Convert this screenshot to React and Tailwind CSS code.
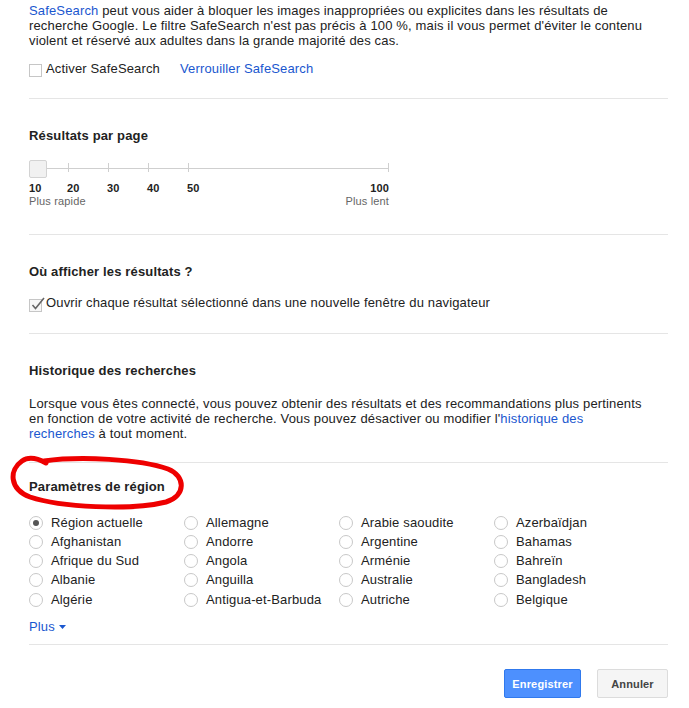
import React from "react";

const F = { fontFamily: '"Liberation Sans", Arial, sans-serif' };

function Sep({ className = "" }) {
  return <div className={"border-t border-[#e5e5e5] " + className} />;
}

function Heading({ children, className = "" }) {
  return (
    <div className={"text-[13px] font-bold leading-[16px] text-[#222] " + className}>
      {children}
    </div>
  );
}

function Radio({ checked, label }) {
  return (
    <div className="flex items-center gap-[8px] h-[19.25px]">
      <span className="w-[14px] h-[14px] rounded-full border border-[#c8c8c8] bg-white flex items-center justify-center shrink-0">
        {checked && <span className="w-[6px] h-[6px] rounded-full bg-[#555]" />}
      </span>
      <span className="text-[13px] text-[#222] leading-[16px] whitespace-nowrap">{label}</span>
    </div>
  );
}

const cols = [
  ["Région actuelle", "Afghanistan", "Afrique du Sud", "Albanie", "Algérie"],
  ["Allemagne", "Andorre", "Angola", "Anguilla", "Antigua-et-Barbuda"],
  ["Arabie saoudite", "Argentine", "Arménie", "Australie", "Autriche"],
  ["Azerbaïdjan", "Bahamas", "Bahreïn", "Bangladesh", "Belgique"],
];

const ticks = [
  { v: "20", x: 39 },
  { v: "30", x: 79 },
  { v: "40", x: 119 },
  { v: "50", x: 159 },
];

export default function App() {
  return (
    <div style={F} className="relative w-[689px] h-[708px] bg-white overflow-hidden text-[#222] tracking-[0.15px]">
      <div className="pl-[29px] pr-[21px]">
        {/* SafeSearch */}
        <p className="pt-[3px] text-[13px] leading-[15px] whitespace-nowrap">
          <span className="text-[#1a57cf]">SafeSearch</span> peut vous aider à bloquer les images inappropriées ou explicites dans les résultats de
          <br />
          recherche Google. Le filtre SafeSearch n'est pas précis à 100 %, mais il vous permet d'éviter le contenu
          <br />
          violent et réservé aux adultes dans la grande majorité des cas.
        </p>
        <div className="mt-[13px] flex items-center h-[16px] text-[13px]">
          <span className="w-[13px] h-[13px] border border-[#c6c6c6] bg-white mt-[3px]" />
          <span className="ml-[4px]">Activer SafeSearch</span>
          <span className="ml-[20px] text-[#1a57cf]">Verrouiller SafeSearch</span>
        </div>
        <Sep className="mt-[21px]" />

        {/* Résultats par page */}
        <Heading className="mt-[29px]">Résultats par page</Heading>
        <div className="mt-[16px] relative w-[360px] h-[18px]">
          <div className="absolute left-[18px] right-0 top-[8px] h-[1px] bg-[#cfcfcf]" />
          {[39, 79, 119, 159, 359].map((x) => (
            <div key={x} className="absolute top-[3px] w-[1px] h-[9px] bg-[#cfcfcf]" style={{ left: x }} />
          ))}
          <div className="absolute left-0 top-0 w-[18px] h-[18px] rounded-[2px] border border-[#d3d3d3] bg-[#f1f1f1]" />
        </div>
        <div className="relative w-[360px] h-[13px] mt-[4px] text-[11px] font-bold leading-[13px] text-[#222]">
          <span className="absolute left-0">10</span>
          {ticks.map((t) => (
            <span key={t.v} className="absolute" style={{ left: t.x - 1 }}>{t.v}</span>
          ))}
          <span className="absolute right-0">100</span>
        </div>
        <div className="flex justify-between w-[360px] text-[11px] leading-[13px] text-[#666]">
          <span>Plus rapide</span>
          <span>Plus lent</span>
        </div>
        <Sep className="mt-[26px]" />

        {/* Où afficher */}
        <Heading className="mt-[29px]">Où afficher les résultats ?</Heading>
        <div className="mt-[15px] flex items-center h-[16px] text-[13px]">
          <span className="relative w-[13px] h-[13px] border border-[#c6c6c6] bg-[#f7f7f7] mt-[4px] shrink-0">
            <svg className="absolute left-[0px] top-[-4px]" width="16" height="16" viewBox="0 0 16 16">
              <path d="M2.5 9 L5.5 12.5 L14 2" fill="none" stroke="#666" strokeWidth="1.6" />
            </svg>
          </span>
          <span className="ml-[4px]">Ouvrir chaque résultat sélectionné dans une nouvelle fenêtre du navigateur</span>
        </div>
        <Sep className="mt-[22px]" />

        {/* Historique */}
        <Heading className="mt-[29px]">Historique des recherches</Heading>
        <p className="mt-[17px] text-[13px] leading-[15px] whitespace-nowrap">
          Lorsque vous êtes connecté, vous pouvez obtenir des résultats et des recommandations plus pertinents
          <br />
          en fonction de votre activité de recherche. Vous pouvez désactiver ou modifier l'<span className="text-[#1a57cf]">historique des</span>
          <br />
          <span className="text-[#1a57cf]">recherches</span> à tout moment.
        </p>
        <Sep className="mt-[21px]" />

        {/* Région */}
        <Heading className="mt-[16px]">Paramètres de région</Heading>
        <div className="mt-[18px] grid grid-cols-[155px_155px_155px_155px]">
          {cols.map((c, i) => (
            <div key={i} className="flex flex-col">
              {c.map((l, j) => (
                <Radio key={l} label={l} checked={i === 0 && j === 0} />
              ))}
            </div>
          ))}
        </div>
        <div className="mt-[9px] flex items-center h-[16px] text-[13px] text-[#1a57cf]">
          Plus
          <svg className="ml-[4px] mt-[2px]" width="7" height="4" viewBox="0 0 7 4">
            <path d="M0 0 L7 0 L3.5 4 Z" fill="#1a57cf" />
          </svg>
        </div>
        <Sep className="mt-[10px]" />

        <div className="mt-[24px] flex justify-end gap-[16px]">
          <button className="w-[77px] h-[29px] rounded-[2px] border border-[#3079ed] bg-[#4d90fe] text-white text-[11px] font-bold">
            Enregistrer
          </button>
          <button className="w-[71px] h-[29px] rounded-[2px] border border-[#dcdcdc] bg-[#f5f5f5] text-[#444] text-[11px] font-bold">
            Annuler
          </button>
        </div>
      </div>

      {/* Red hand-drawn ellipse */}
      <svg className="absolute left-0 top-0 pointer-events-none" width="689" height="708" viewBox="0 0 689 708">
        <path
          d="M44 461 C 80 456, 140 459, 168 469 C 186 476, 186 496, 166 502 C 130 511, 60 507, 30 497 C 9 489, 9 470, 22 461 C 29 456, 37 458, 46 463"
          fill="none"
          stroke="#ee0000"
          strokeWidth="5"
          strokeLinecap="round"
          strokeLinejoin="round"
        />
      </svg>
    </div>
  );
}
